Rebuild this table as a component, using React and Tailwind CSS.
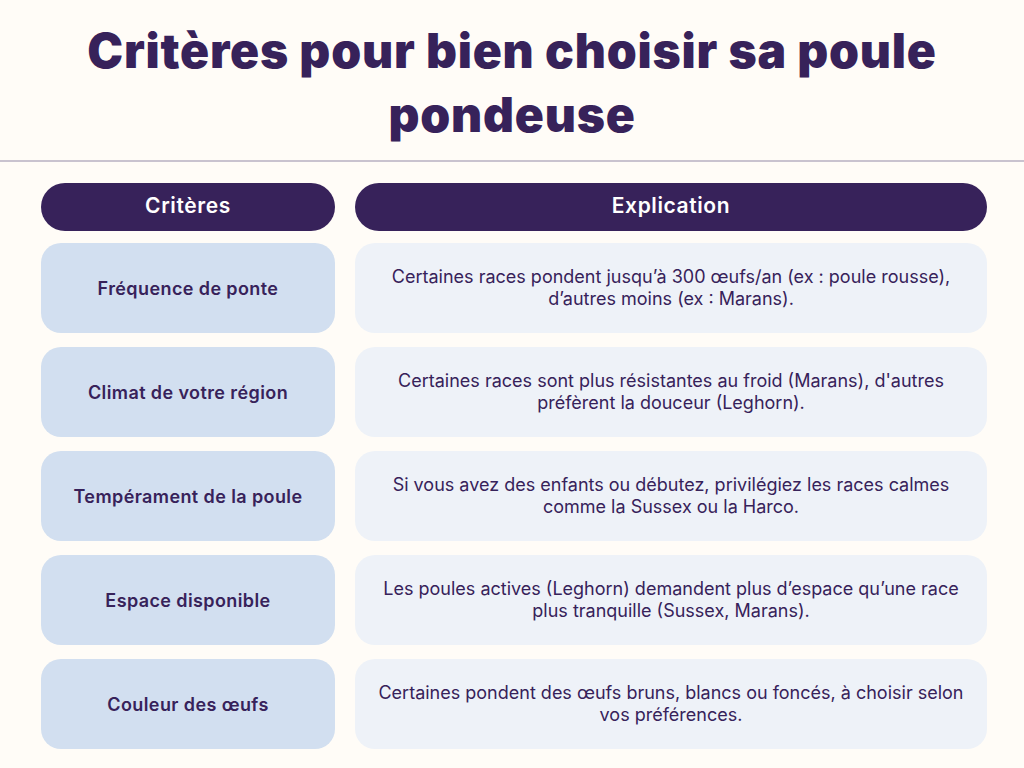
import React from "react";

const rows = [
  {
    critere: "Fréquence de ponte",
    texte: "Certaines races pondent jusqu’à 300 œufs/an (ex : poule rousse), d’autres moins (ex : Marans).",
  },
  {
    critere: "Climat de votre région",
    texte: "Certaines races sont plus résistantes au froid (Marans), d'autres préfèrent la douceur (Leghorn).",
  },
  {
    critere: "Tempérament de la poule",
    texte: "Si vous avez des enfants ou débutez, privilégiez les races calmes comme la Sussex ou la Harco.",
  },
  {
    critere: "Espace disponible",
    texte: "Les poules actives (Leghorn) demandent plus d’espace qu’une race plus tranquille (Sussex, Marans).",
  },
  {
    critere: "Couleur des œufs",
    texte: "Certaines pondent des œufs bruns, blancs ou foncés, à choisir selon vos préférences.",
  },
];

const App = () => {
  return (
    <div className="w-[1024px] h-[768px] overflow-hidden bg-[#fffcf7] text-[#37225a] font-['Inter',sans-serif]">
      <h1 className="pt-[19px] px-10 text-center text-[48px] leading-[64px] font-black tracking-[0.8px] h-[160px]">
        Critères pour bien choisir sa poule pondeuse
      </h1>
      <div className="h-[2px] bg-[#c9c3cf]"></div>

      <div className="px-[41px] pt-[21px]">
        <div className="grid grid-cols-[294px_632px] gap-x-5">
          <div className="h-12 rounded-full bg-[#37225a] text-white flex items-center justify-center text-[21px] tracking-[0.6px] font-semibold pb-[3px]">
            Critères
          </div>
          <div className="h-12 rounded-full bg-[#37225a] text-white flex items-center justify-center text-[21px] tracking-[0.6px] font-semibold pb-[3px]">
            Explication
          </div>
        </div>

        <div className="flex flex-col gap-[14px] mt-3">
          {rows.map((row, i) => (
            <div key={i} className="grid grid-cols-[294px_632px] gap-x-5">
              <div className="h-[90px] rounded-[20px] bg-[#d2dff0] flex items-center justify-center text-center px-4 text-[18px] tracking-[0.4px] font-semibold">
                {row.critere}
              </div>
              <div className="h-[90px] rounded-[20px] bg-[#eef2f8] flex items-center justify-center text-center px-4 text-[18px] leading-[22px]">
                {row.texte}
              </div>
            </div>
          ))}
        </div>
      </div>
    </div>
  );
};

export default App;
